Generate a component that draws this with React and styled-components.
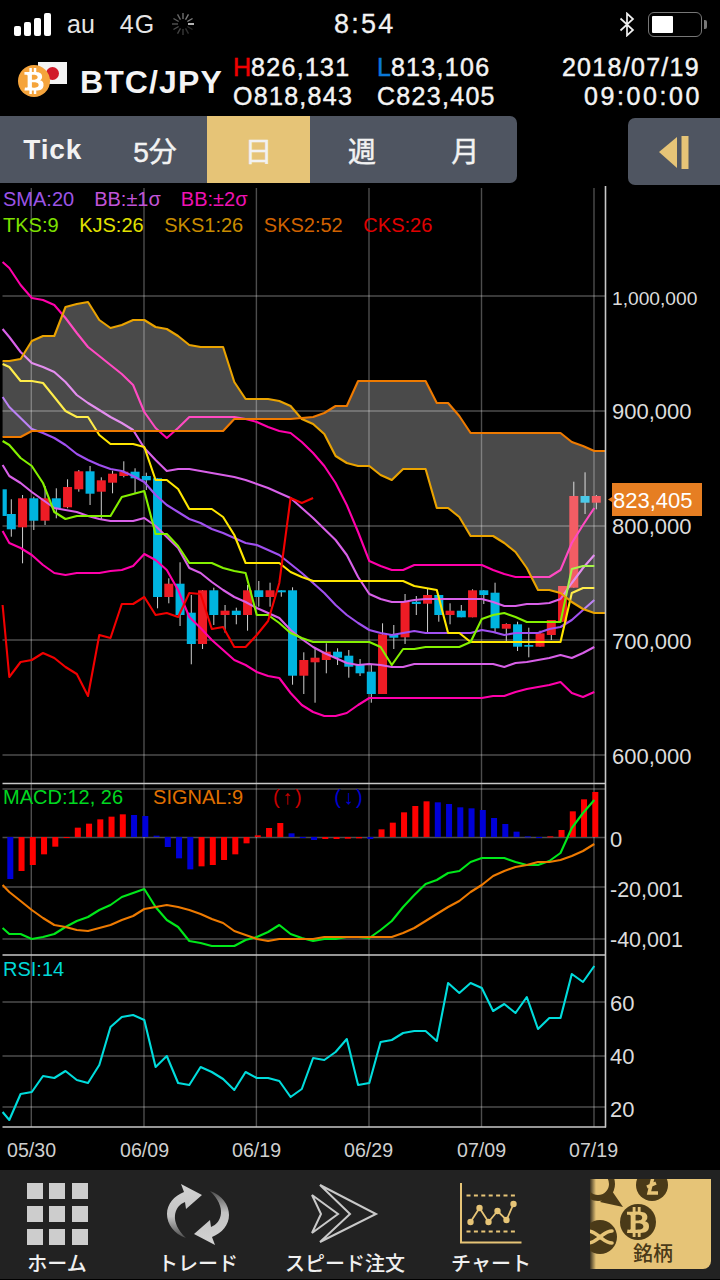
import React from 'react';
import styled, { createGlobalStyle } from 'styled-components';
import { FaBtc } from 'react-icons/fa';

const SANS = '"Liberation Sans", Arial, sans-serif';
const CJK = '"Liberation Sans", "Noto Sans CJK JP", sans-serif';
const GOLD = '#e6c477';

const Global = createGlobalStyle`
  html, body { margin: 0; background: #000; }
  #root { width: 720px; height: 1280px; overflow: hidden; }
  * { box-sizing: border-box; }
`;

/* ---------- data (pixel positions read off the chart) ---------- */
const X = (i) => (i === 0 ? 2.6 : 9.3 + 11.25 * (i - 1));
const pts = (ys) => ys.map((y, i) => `${X(i).toFixed(1)},${y}`).join(' ');

const SKS1 = [361,361,359,341,336,336,307,304,302,320,328,325,320,320,327,329,336,345,347,347,347,382,399,399,399,401,406,419,424,434,456,463,466,466,475,480,469,469,469,508,508,517,536,536,536,543,552,568,590,590,593,602,609,613,613];
const SKS2 = [437,437,437,431,431,431,431,431,431,431,431,431,431,431,431,431,431,431,431,431,431,419,419,419,419,419,419,418,417,413,406,406,381,381,381,381,381,381,381,403,403,416,433,433,433,433,433,433,433,433,433,442,446,451,451];
const BB2U = [262,268,285,298,300,305,318,333,347,356,365,374,385,412,428,438,428,417,417,417,417,417,419,422,427,431,433,442,453,466,483,505,532,561,566,570,570,565,565,565,565,565,565,565,570,574,577,577,577,577,570,543,525,508];
const BB1U = [329,337,352,363,367,372,382,395,403,410,417,423,430,448,460,471,469,469,471,473,475,477,480,484,488,493,498,508,518,529,540,555,577,594,599,602,602,600,599,599,599,599,599,599,602,606,606,604,604,603,599,583,568,555];
const SMA = [397,407,418,429,433,438,445,454,460,465,469,471,476,482,495,505,512,519,523,529,533,538,543,545,550,555,564,573,583,593,605,615,623,630,633,635,633,631,633,633,633,633,633,630,632,635,633,633,633,629,627,620,610,600];
const BB1D = [465,476,483,492,500,508,510,512,516,519,521,521,521,518,526,537,548,568,573,582,590,597,602,608,613,618,630,639,647,653,658,663,665,664,665,667,667,664,664,664,664,664,664,664,664,667,663,662,660,658,655,658,653,647];
const BB2D = [531,543,548,555,565,573,575,573,573,573,571,570,566,554,560,570,590,617,628,640,650,660,665,672,676,678,693,705,712,716,716,713,705,698,698,698,698,698,698,698,698,698,698,698,696,696,692,689,687,685,682,693,697,692];
const KJS = [364,367,381,381,383,397,411,417,417,435,444,444,444,447,480,480,489,509,509,509,517,535,563,563,563,563,572,577,581,581,581,581,581,581,581,581,581,586,588,590,633,633,642,642,642,642,642,642,642,642,642,593,588,588];
const TKS = [441,445,458,466,483,512,519,516,516,516,516,497,494,491,534,534,546,563,563,563,568,571,573,615,615,623,633,638,642,642,642,642,642,642,647,665,649,649,647,647,647,647,642,619,615,613,617,622,622,622,622,569,566,566];
const CKS = [605,677,662,660,653,658,667,674,696,635,638,604,604,597,615,613,617,593,594,629,627,647,647,635,621,583,498,503,498];
const MACD = [928,934,934,939,937,934,927,921,917,910,905,897,893,889,907,920,927,941,943,946,946,946,940,937,932,925,934,938,941,939,939,937,937,938,930,921,907,895,884,880,873,871,862,858,858,858,862,865,865,861,853,828,813,800];
const SIGNAL = [885,892,901,910,918,925,927,930,931,928,925,920,916,909,907,905,907,910,914,919,923,931,935,939,941,939,939,939,939,937,937,937,937,937,937,937,933,928,921,914,907,901,892,885,876,871,867,865,862,862,860,856,851,844];
const RSI = [1112,1120,1094,1092,1076,1078,1071,1080,1083,1065,1027,1017,1015,1020,1067,1056,1083,1085,1067,1072,1079,1090,1072,1078,1078,1081,1097,1089,1058,1060,1052,1039,1085,1083,1042,1040,1033,1031,1031,1041,983,993,983,988,1011,1004,1013,997,1029,1018,1018,974,982,966];

/* colour, wick top, body top, body bottom, wick bottom (3x crop units from y=440) */
const CANDLES = [
  ['b',178,222,268,290],['r',165,175,262,370],['b',170,175,242,270],['r',138,175,242,255],['b',145,175,205,235],
  ['r',118,141,202,205],['r',90,94,148,155],['b',78,94,161,195],['r',112,121,155,240],['r',92,101,128,160],
  ['r',64,95,108,112],['b',85,95,115,160],['b',98,108,121,150],['b',115,115,471,505],['r',415,431,471,490],
  ['b',367,431,525,558],['b',465,518,612,673],['r',450,451,612,627],['b',443,451,525,555],['r',495,512,525,578],
  ['b',503,512,525,553],['r',435,451,525,572],['b',423,451,471,500],['r',428,451,471,500],['b',451,451,457,470],
  ['b',442,451,707,734],['r',637,660,707,762],['r',625,653,667,788],['r',610,635,660,700],['b',625,635,653,675],
  ['b',630,647,680,713],['b',657,673,700,708],['b',675,695,762,788],['r',550,583,762,762],['b',555,583,593,627],
  ['r',462,485,592,612],['b',468,485,492,525],['r',445,465,491,577],['b',465,465,525,545],['r',490,512,525,553],
  ['b',495,512,532,532],['r',448,451,532,532],['b',450,451,465,492],['b',428,458,565,577],['r',550,552,566,605],
  ['b',545,553,620,633],['b',563,615,620,652],['r',572,580,620,620],['r',540,540,585,600],['r',438,438,545,545],
  ['r',125,168,443,443],['b',97,168,188,222],['r',165,168,188,208],
];
const Y = (v) => +(440 + v / 3).toFixed(1);

const BARS = [
  ['b',297],['r',273],['r',255],['r',223],['r',200],['r',174],['r',143],['r',131],['r',118],['r',110],['r',103],
  ['b',105],['b',108],['b',167],['b',201],['b',235],['b',268],['r',259],['r',255],['r',240],['r',223],['r',190],
  ['r',166],['r',144],['r',129],['b',160],['b',174],['b',180],['r',177],['r',177],['r',176],['r',175],
  ['b',177],['r',148],['r',128],['r',97],['r',78],['r',64],['b',67],['b',72],['b',82],['b',85],['b',90],
  ['b',114],['b',132],['b',155],['b',169],['b',171],['r',169],['r',150],['r',94],['r',58],['r',36],
];

/* ---------- page ---------- */
const Page = styled.div`
  width: 720px;
  height: 1280px;
  display: flex;
  flex-direction: column;
  background: #000;
  font-family: ${SANS};
`;

/* status bar */
const StatusBar = styled.div`
  height: 50px;
  display: grid;
  grid-template-columns: 320px auto 1fr;
  align-items: center;
  padding: 0 13px 2px 14px;
  color: #e6e6e6;
`;
const StatusLeft = styled.div`
  display: flex;
  align-items: center;
`;
const StatusRight = styled.div`
  display: flex;
  align-items: center;
  justify-content: flex-end;
`;
const Signal = styled.div`
  display: flex;
  align-items: flex-end;
  gap: 3px;
  height: 24px;
`;
const SignalBar = styled.span`
  width: 7px;
  height: ${(p) => p.$h}px;
  background: #fff;
  border-radius: 2px;
`;
const Carrier = styled.span`
  font-size: 25px;
  line-height: 28px;
  letter-spacing: ${(p) => p.$ls || 0}px;
  margin-left: ${(p) => p.$ml}px;
`;
const Clock = styled.span`
  font-size: 27px;
  line-height: 30px;
  letter-spacing: 2.2px;
  color: #f2f2f2;
  -webkit-text-stroke: 0.3px #f2f2f2;
`;
const Battery = styled.div`
  position: relative;
  width: 54px;
  height: 25px;
  margin-left: 13px;
  margin-right: 5px;
  border: 1.5px solid #777;
  border-radius: 6px;
  padding: 3px;
  &::after {
    content: '';
    position: absolute;
    right: -6px;
    top: 7px;
    width: 3px;
    height: 9px;
    background: #777;
    border-radius: 0 2px 2px 0;
  }
`;
const BatteryFill = styled.div`
  width: 21px;
  height: 100%;
  background: #fff;
  border-radius: 1px;
`;

/* header */
const Header = styled.div`
  height: 66px;
  display: flex;
  align-items: flex-start;
  padding-left: 18px;
  color: #f4f4f4;
`;
const Logo = styled.div`
  position: relative;
  width: 49px;
  height: 35px;
  margin-top: 12px;
  flex: none;
`;
const Flag = styled.div`
  position: absolute;
  left: 20px;
  top: 0;
  width: 29px;
  height: 22px;
  background: #f4f4f4;
  display: flex;
  align-items: center;
  justify-content: center;
  &::after {
    content: '';
    width: 13px;
    height: 13px;
    border-radius: 50%;
    background: #d11a2a;
  }
`;
const Coin = styled.div`
  position: absolute;
  left: 0;
  top: 3px;
  width: 32px;
  height: 32px;
  border-radius: 50%;
  background: #f5a43c;
  color: #fff;
  display: flex;
  align-items: center;
  justify-content: center;
  font-size: 26px;
`;
const Title = styled.div`
  width: 153px;
  margin: 14px 0 0 13px;
  font-size: 32px;
  line-height: 36px;
  font-weight: 700;
  letter-spacing: 1.1px;
  flex: none;
`;
const Ohlc = styled.div`
  display: grid;
  grid-template-columns: 144px 130px;
  padding-top: 3px;
  font-size: 25px;
  line-height: 29px;
  letter-spacing: 1.3px;
  -webkit-text-stroke: 0.45px #f4f4f4;
`;
const Mark = styled.span`
  color: ${(p) => p.$c};
  -webkit-text-stroke: 0.45px ${(p) => p.$c};
  letter-spacing: 0;
`;
const Stamp = styled.div`
  margin-left: auto;
  padding: 3px 20px 0 0;
  text-align: right;
  font-size: 25px;
  line-height: 29px;
  -webkit-text-stroke: 0.45px #f4f4f4;
`;
const StampLine = styled.div`
  letter-spacing: ${(p) => p.$ls}px;
  margin-right: ${(p) => p.$mr}px;
`;

/* period toolbar */
const Toolbar = styled.div`
  height: 68px;
  display: flex;
  justify-content: space-between;
  align-items: flex-start;
`;
const Tabs = styled.div`
  width: 517px;
  height: 67px;
  display: grid;
  grid-template-columns: repeat(5, 1fr);
  background: #4f5561;
  border-radius: 0 7px 7px 0;
  overflow: hidden;
`;
const Tab = styled.div`
  display: flex;
  align-items: center;
  justify-content: center;
  font-family: ${CJK};
  font-size: 28px;
  font-weight: ${(p) => (p.$latin ? 700 : 400)};
  letter-spacing: ${(p) => (p.$latin ? '0.8px' : 0)};
  -webkit-text-stroke: ${(p) => (p.$latin ? 0 : '0.5px')};
  color: #f2f2f2;
  background: ${(p) => (p.$active ? GOLD : 'transparent')};
  padding: ${(p) => (p.$latin ? '1px 0 0 2px' : 0)};
`;
const Collapse = styled.div`
  width: 92px;
  height: 67px;
  margin-top: 2px;
  background: #4f5561;
  border-radius: 7px 0 0 7px;
  display: flex;
  align-items: center;
  padding-left: 31px;
`;

/* chart */
const ChartArea = styled.div`
  position: relative;
  height: 986px;
  flex: none;
`;
const ChartSvg = styled.svg`
  display: block;
  width: 720px;
  height: 986px;
`;
const Legend = styled.div`
  position: absolute;
  left: 3px;
  top: ${(p) => p.$top}px;
  display: flex;
  gap: ${(p) => p.$gap || 20}px;
  font-size: 20px;
  line-height: 24px;
  white-space: nowrap;
`;
const LegendItem = styled.span`
  color: ${(p) => p.$c};
  letter-spacing: ${(p) => p.$ls || 0}px;
`;
const GridLine = styled.line`
  stroke: #fff;
  stroke-opacity: 0.3;
  stroke-width: 1.4;
`;
const FrameLine = styled.line`
  stroke: #c8c8c8;
  stroke-width: 1.6;
`;
const Series = styled.polyline`
  fill: none;
  stroke: ${(p) => p.$c};
  stroke-width: ${(p) => p.$w || 2.1};
  stroke-linejoin: round;
`;
const Cloud = styled.polygon`
  fill: #fff;
  fill-opacity: 0.29;
`;
const Wick = styled.line`
  stroke: #cfcfcf;
  stroke-width: 1;
`;
const Body = styled.rect`
  fill: ${(p) => (p.$up ? '#ee1c25' : '#00b4e0')};
`;
const Bar = styled.rect`
  fill: ${(p) => (p.$up ? '#ff0000' : '#0000d8')};
`;
const AxisText = styled.text`
  font-family: ${SANS};
  font-size: ${(p) => p.$s || 22}px;
  fill: ${(p) => p.$c || '#dcdcdc'};
`;
const DateText = styled.text`
  font-family: ${SANS};
  font-size: 19.6px;
  fill: #cfcfcf;
`;
const PriceTag = styled.polygon`
  fill: #e67e22;
`;

/* bottom tab bar */
const TabBar = styled.div`
  height: 109px;
  flex: none;
  display: grid;
  grid-template-columns: 114px 168px 126px 166px 137px;
  background: #222;
  padding-top: 13px;
`;
const TabItem = styled.div`
  display: flex;
  flex-direction: column;
  align-items: center;
  white-space: nowrap;
`;
const TabIcon = styled.svg`
  display: block;
  height: 62px;
  width: ${(p) => p.$w}px;
  flex: none;
`;
const HomeGrid = styled.div`
  width: 61px;
  height: 62px;
  display: grid;
  grid-template-columns: repeat(3, 16px);
  grid-auto-rows: 16px;
  justify-content: space-between;
  align-content: space-between;
`;
const HomeCell = styled.span`
  background: #cdcdcd;
`;
const TabLabel = styled.span`
  margin-top: 6px;
  font-family: "Noto Sans CJK JP", sans-serif;
  font-size: 20px;
  line-height: 24px;
  font-weight: 500;
  color: #f0f0f0;
`;
const ActiveWrap = styled.div`
  position: relative;
  width: 121px;
  height: 90px;
  margin: -4px 0 0 16px;
  border-radius: 0 0 8px 0;
  overflow: hidden;
  background: linear-gradient(90deg, #3a3220 0, ${GOLD} 6px);
  display: flex;
  align-items: flex-end;
  justify-content: flex-end;
  padding: 0 38px 2px 0;
`;
const ActiveArt = styled.svg`
  position: absolute;
  left: 0;
  top: 0;
  width: 121px;
  height: 90px;
`;
const ActiveLabel = styled.span`
  position: relative;
  font-family: "Noto Sans CJK JP", sans-serif;
  font-size: 20px;
  line-height: 28px;
  font-weight: 500;
  color: #4a3a18;
`;

const Spinner = () => (
  <svg width="24" height="24" viewBox="-12 -12 24 24" style={{ marginLeft: 16 }}>
    {Array.from({ length: 12 }, (_, i) => {
      const a = (i * Math.PI) / 6;
      return (
        <line key={i} x1={5 * Math.cos(a)} y1={5 * Math.sin(a)} x2={11 * Math.cos(a)} y2={11 * Math.sin(a)}
          stroke="#fff" strokeWidth="1.4" strokeOpacity={i === 0 ? 1 : 0.12 + 0.035 * i} />
      );
    })}
  </svg>
);

const Bluetooth = () => (
  <svg width="16" height="25" viewBox="0 0 16 25">
    <path d="M1.5 6.5 L14 18 L8 23.5 L8 1.5 L14 7 L1.5 18.5" fill="none" stroke="#f0f0f0" strokeWidth="1.7" />
  </svg>
);

const TradeIcon = () => {
  const half = 'M-12 24 C-24 20 -31 10 -31 0 C-31 -10 -24 -18 -14 -22 L-17 -30 L4 -19 L-12 -5 L-13 -12 C-24 -8 -29 8 -12 24 Z';
  return (
    <TabIcon $w={70} viewBox="-35 -31 70 62">
      <defs>
        <linearGradient id="tradeFade" gradientUnits="userSpaceOnUse" x1="0" y1="-30" x2="0" y2="24">
          <stop offset="0" stopColor="#d2d2d2" />
          <stop offset="0.6" stopColor="#c4c4c4" />
          <stop offset="1" stopColor="#4c4c4c" />
        </linearGradient>
      </defs>
      <path d={half} fill="url(#tradeFade)" />
      <path d={half} fill="url(#tradeFade)" transform="rotate(180) translate(0 -1)" />
    </TabIcon>
  );
};

const SpeedIcon = () => (
  <TabIcon $w={70} viewBox="310 1184 70 62">
    <polygon points="320,1186 376,1215 320,1243 350,1215" fill="none" stroke="#c9c9c9" strokeWidth="2" />
    <polygon points="312,1196 338,1215 312,1234 321,1215" fill="none" stroke="#c9c9c9" strokeWidth="2" />
  </TabIcon>
);

const ChartIcon = () => (
  <TabIcon $w={62} viewBox="460.5 1184 62 62">
    <path d="M461.5 1184 V1243.5 H522" fill="none" stroke={GOLD} strokeWidth="2" />
    <path d="M467 1196.5 H517 M467 1232.5 H517" fill="none" stroke={GOLD} strokeWidth="2" strokeDasharray="4 3.4" />
    <polyline points="471,1223 480,1209 489,1223 498,1212 507,1221 514,1205" fill="none" stroke={GOLD} strokeWidth="1.8" />
    {[[471,1223],[480,1209],[489,1223],[498,1212],[507,1221],[514,1205]].map(([cx, cy]) => (
      <circle key={cx} cx={cx} cy={cy} r="3.2" fill={GOLD} />
    ))}
  </TabIcon>
);

const CoinsArt = () => {
  const dark = '#4a3a18';
  return (
    <ActiveArt viewBox="0 0 121 90">
      <circle cx="8" cy="5" r="14" fill="none" stroke={dark} strokeWidth="6" />
      <polygon points="10,23 22,12 33,28" fill={dark} />
      <circle cx="62" cy="6" r="16" fill={dark} />
      <path d="M63 -2 L59 14 H68 M57 8 L66 4" fill="none" stroke={GOLD} strokeWidth="3.4" />
      <circle cx="48" cy="43" r="18" fill={dark} />
      <FaBtc x="33" y="28" size={30} color={GOLD} />
      <circle cx="10" cy="58" r="17" fill={dark} />
      <path d="M-2 52 C3 52 6 55 10 58 C14 61 17 64 22 64 M22 52 C17 52 14 55 10 58 C6 61 3 64 -2 64" fill="none" stroke={GOLD} strokeWidth="3.6" strokeLinecap="round" />
    </ActiveArt>
  );
};

const Chart = () => {
  const cloud = pts(SKS1) + ' ' + SKS2.map((y, i) => `${X(i).toFixed(1)},${y}`).reverse().join(' ');
  const vgrid = [31.3, 144, 256.4, 369, 481.5, 594];
  const hgrid = [296, 411, 526, 640, 755, 789, 837.5, 887, 939, 1002, 1056, 1107];
  return (
    <ChartSvg viewBox="0 184 720 986">
      {vgrid.map((x) => <GridLine key={x} x1={x} x2={x} y1="188" y2="1127" />)}
      {hgrid.map((y) => <GridLine key={y} x1="2.5" x2="605" y1={y} y2={y} />)}

      <Body x="2.6" y={Y(148)} width="4.2" height={(228 - 148) / 3} />
      {CANDLES.map(([c, wt, bt, bb, wb], k) => {
        const x = 11.3 + 11.25 * k;
        return (
          <g key={k}>
            <Wick x1={x} x2={x} y1={Y(wt)} y2={Y(wb)} />
            <Body $up={c === 'r'} x={x - 4.5} y={Y(bt)} width="9" height={Y(bb) - Y(bt)} />
          </g>
        );
      })}

      <Series $c="#a050f0" points={pts(SMA)} />
      <Series $c="#d860e8" points={pts(BB1U)} />
      <Series $c="#d860e8" points={pts(BB1D)} />
      <Series $c="#ff00aa" points={pts(BB2U)} />
      <Series $c="#ff00aa" points={pts(BB2D)} />
      <Series $c="#ffe600" points={pts(KJS)} />
      <Series $c="#84f000" points={pts(TKS)} />
      <Series $c="#f20000" points={pts(CKS)} />
      <Cloud points={cloud} />
      <Series $c="#eaa300" points={pts(SKS1)} />
      <Series $c="#ee7a00" points={pts(SKS2)} />

      {BARS.map(([c, v], k) => {
        const x = 10.3 + 11.25 * k;
        const end = 780 + v / 3;
        return <Bar key={k} $up={c === 'r'} x={x - 3} y={Math.min(end, 837)} width="6" height={Math.max(Math.abs(end - 837), 1)} />;
      })}
      <Series $c="#00e81a" points={pts(MACD)} />
      <Series $c="#ee7a00" points={pts(SIGNAL)} />
      <Series $c="#00dcdc" points={pts(RSI)} />

      <FrameLine x1="2.5" x2="606" y1="783.5" y2="783.5" />
      <FrameLine x1="2.5" x2="606" y1="955" y2="955" />
      <FrameLine x1="2.5" x2="606" y1="1127" y2="1127" />
      <FrameLine x1="605.5" x2="605.5" y1="186" y2="1127.5" />

      <AxisText x="612" y="305" $s={19.2}>1,000,000</AxisText>
      <AxisText x="612" y="419">900,000</AxisText>
      <AxisText x="612" y="534">800,000</AxisText>
      <AxisText x="612" y="649">700,000</AxisText>
      <AxisText x="612" y="764">600,000</AxisText>

      <PriceTag points="608,499.5 612,497 612,483 702,483 702,516 612,516 612,502" />
      <AxisText x="613" y="508" $c="#fff">823,405</AxisText>

      <AxisText x="610" y="847">0</AxisText>
      <AxisText x="610" y="897" $s={21.5}>-20,001</AxisText>
      <AxisText x="610" y="947" $s={21.5}>-40,001</AxisText>
      <AxisText x="610" y="1011">60</AxisText>
      <AxisText x="610" y="1064">40</AxisText>
      <AxisText x="610" y="1117">20</AxisText>

      {[['05/30',7],['06/09',120],['06/19',232],['06/29',344],['07/09',457],['07/19',569]].map(([t, x]) => (
        <DateText key={t} x={x} y="1157">{t}</DateText>
      ))}
    </ChartSvg>
  );
};

export default function App() {
  return (
    <Page>
      <Global />
      <StatusBar>
        <StatusLeft>
          <Signal>
            <SignalBar $h={10} />
            <SignalBar $h={14} />
            <SignalBar $h={18} />
            <SignalBar $h={23} />
          </Signal>
          <Carrier $ml={16}>au</Carrier>
          <Carrier $ml={25} $ls={1}>4G</Carrier>
          <Spinner />
        </StatusLeft>
        <Clock>8:54</Clock>
        <StatusRight>
          <Bluetooth />
          <Battery><BatteryFill /></Battery>
        </StatusRight>
      </StatusBar>

      <Header>
        <Logo>
          <Flag />
          <Coin><FaBtc /></Coin>
        </Logo>
        <Title>BTC/JPY</Title>
        <Ohlc>
          <span><Mark $c="#f00000">H</Mark>826,131</span>
          <span><Mark $c="#0a78d8">L</Mark>813,106</span>
          <span>O818,843</span>
          <span>C823,405</span>
        </Ohlc>
        <Stamp>
          <StampLine $ls={1.3} $mr={0}>2018/07/19</StampLine>
          <StampLine $ls={2.6} $mr={-2}>09:00:00</StampLine>
        </Stamp>
      </Header>

      <Toolbar>
        <Tabs>
          <Tab $latin>Tick</Tab>
          <Tab>5分</Tab>
          <Tab $active>日</Tab>
          <Tab>週</Tab>
          <Tab>月</Tab>
        </Tabs>
        <Collapse>
          <svg width="30" height="34" viewBox="0 0 30 34">
            <polygon points="0,17 18,2 18,33" fill={GOLD} />
            <rect x="22.5" y="1" width="7" height="33" fill={GOLD} />
          </svg>
        </Collapse>
      </Toolbar>

      <ChartArea>
        <Chart />
        <Legend $top={3}>
          <LegendItem $c="#9c54e4">SMA:20</LegendItem>
          <LegendItem $c="#c254d8">BB:±1σ</LegendItem>
          <LegendItem $c="#ee12b2">BB:±2σ</LegendItem>
        </Legend>
        <Legend $top={29} $gap={20.6}>
          <LegendItem $c="#7ee000">TKS:9</LegendItem>
          <LegendItem $c="#e2e000">KJS:26</LegendItem>
          <LegendItem $c="#c88c00">SKS1:26</LegendItem>
          <LegendItem $c="#d06200">SKS2:52</LegendItem>
          <LegendItem $c="#e00000">CKS:26</LegendItem>
        </Legend>
        <Legend $top={601} $gap={30}>
          <LegendItem $c="#00d820">MACD:12, 26</LegendItem>
          <LegendItem $c="#e07000">SIGNAL:9</LegendItem>
          <LegendItem $c="#c80000" $ls={2.6}>(↑)</LegendItem>
          <LegendItem $c="#0000d0" $ls={2.6}>(↓)</LegendItem>
        </Legend>
        <Legend $top={773}>
          <LegendItem $c="#00d8d8">RSI:14</LegendItem>
        </Legend>
      </ChartArea>

      <TabBar>
        <TabItem>
          <HomeGrid>{Array.from({ length: 9 }, (_, i) => <HomeCell key={i} />)}</HomeGrid>
          <TabLabel>ホーム</TabLabel>
        </TabItem>
        <TabItem>
          <TradeIcon />
          <TabLabel>トレード</TabLabel>
        </TabItem>
        <TabItem>
          <SpeedIcon />
          <TabLabel>スピード注文</TabLabel>
        </TabItem>
        <TabItem>
          <ChartIcon />
          <TabLabel>チャート</TabLabel>
        </TabItem>
        <ActiveWrap>
          <CoinsArt />
          <ActiveLabel>銘柄</ActiveLabel>
        </ActiveWrap>
      </TabBar>
    </Page>
  );
}
